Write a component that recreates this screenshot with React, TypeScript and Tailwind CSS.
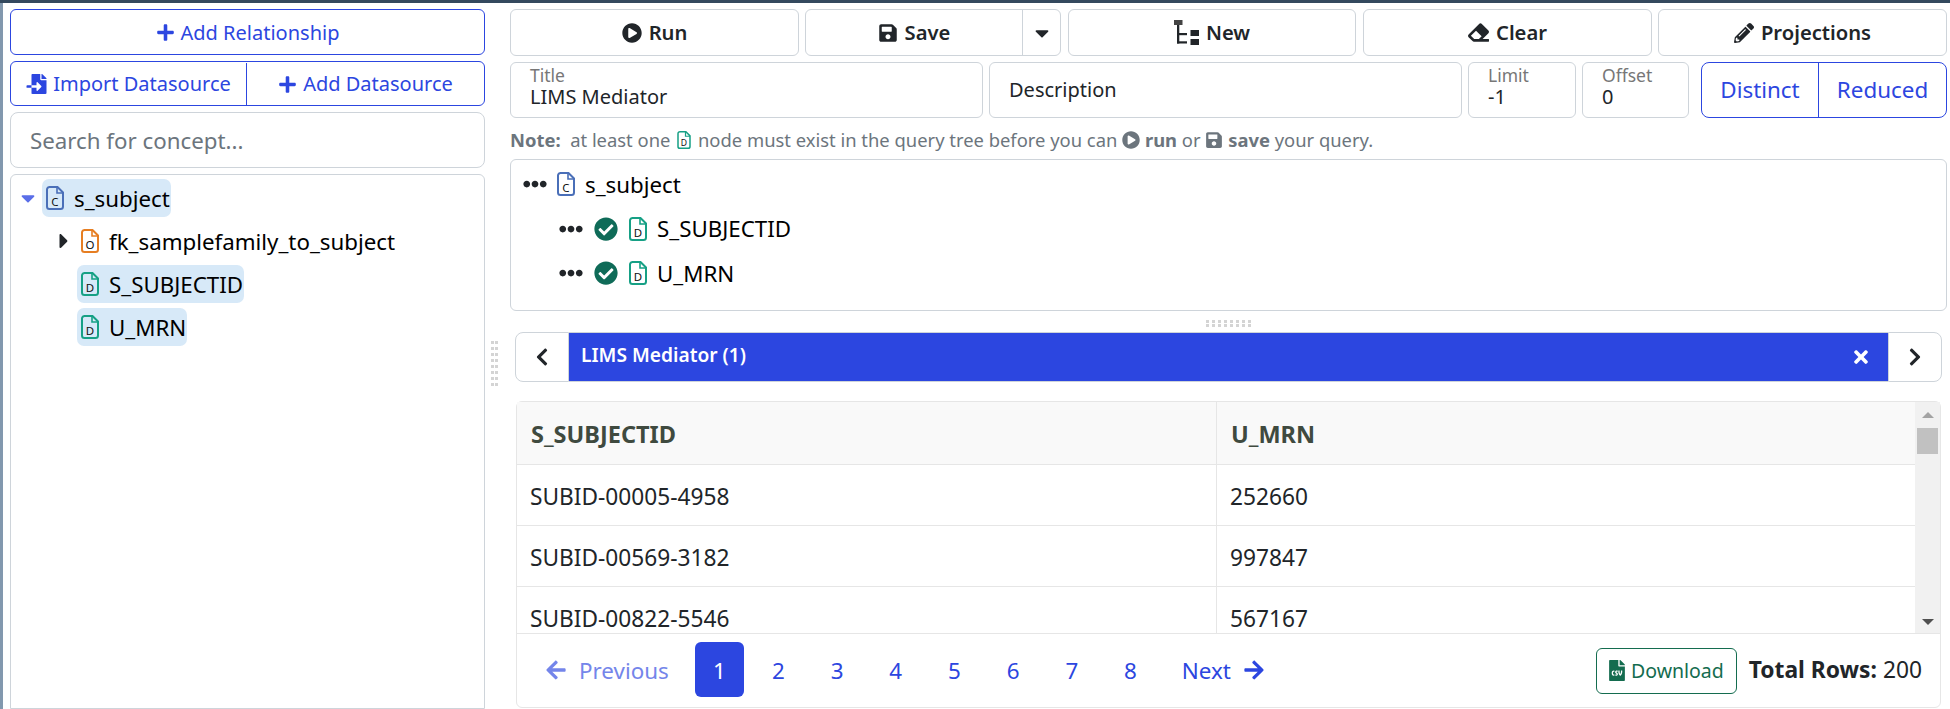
import React from "react";
import { FaPlus, FaFileImport, FaPlayCircle, FaSave, FaCaretDown, FaCaretRight, FaEraser, FaPencilAlt, FaEllipsisH, FaCheckCircle, FaChevronLeft, FaChevronRight, FaTimes, FaArrowLeft, FaArrowRight, FaFileCsv } from "react-icons/fa";

function FileIcon({ letter, className }: { letter: string; className: string }) {
  return (
    <svg viewBox="0 0 18 24" className={className} fill="none">
      <path d="M3 1h8.5L17 6.500V20.500a2.500 2.500 0 0 1-2.500 2.500h-11A2.500 2.500 0 0 1 1 20.500v-17A2.500 2.500 0 0 1 3.500 1z" stroke="currentColor" strokeWidth="2" />
      <path d="M11 1v6h6" stroke="currentColor" strokeWidth="1.600" />
      <text x="9" y="19.500" textAnchor="middle" fontSize="11.500" fill="#111" fontFamily="Noto Sans, sans-serif">{letter}</text>
    </svg>
  );
}

function NewIcon() {
  return (
    <svg viewBox="0 0 25 25" className="h-[25px] w-[25px]" fill="currentColor">
      <rect x="0" y="0" width="8.500" height="5" fill="#444" />
      <rect x="3" y="5" width="2.300" height="18.500" />
      <rect x="3" y="13" width="10" height="2.200" />
      <rect x="3" y="21.300" width="10" height="2.200" />
      <rect x="16.500" y="10" width="8.500" height="6" />
      <rect x="16.500" y="19" width="8.500" height="6" />
    </svg>
  );
}

function ActionButton({ children, className }: { children: React.ReactNode; className: string }) {
  return (
    <div className={"flex h-[47px] items-center justify-center gap-[7px] rounded-[6px] border border-[#ced4da] text-[20.200px] font-semibold text-[#212529] " + className}>
      {children}
    </div>
  );
}

function FloatField({ label, value, className }: { label: string; value: string; className: string }) {
  return (
    <div className={"flex h-[56px] flex-col justify-center rounded-[6px] border border-[#ced4da] px-[19px] pb-[6px] " + className}>
      <span className="text-[17.500px] leading-[20px] text-[#777]">{label}</span>
      <span className="text-[20px] leading-[24px] text-[#212529]">{value}</span>
    </div>
  );
}

function TreeRow({ letter, color, label, selected, className }: { letter: string; color: string; label: string; selected?: boolean; className: string }) {
  return (
    <div className={"flex h-[38px] items-center gap-[10px] rounded-[7px] pl-[4px] pr-[1px] " + (selected ? "bg-[#d7e9f8] " : "") + className}>
      <FileIcon letter={letter} className={"h-[24px] w-[18px] " + color} />
      <span className="pt-[2px] text-[22.300px] text-black">{label}</span>
    </div>
  );
}

function QueryRow({ letter, color, label, checked, className }: { letter: string; color: string; label: string; checked?: boolean; className: string }) {
  return (
    <div className={"flex h-[44.500px] items-center " + className}>
      <FaEllipsisH className="mr-[10px] h-[24px] w-[24px] text-[#212529]" />
      {checked && <FaCheckCircle className="mr-[11px] ml-[1px] h-[24px] w-[24px] text-[#0f6b58]" />}
      <FileIcon letter={letter} className={"mr-[10px] h-[24px] w-[18px] " + color} />
      <span className="text-[22.300px] text-black">{label}</span>
    </div>
  );
}

function Grip({ cols, rows, className }: { cols: number; rows: number; className: string }) {
  const dots = Array.from({ length: cols * rows });
  return (
    <div className={"grid " + className}>
      {dots.map((_, i) => (
        <span key={i} className="h-[3px] w-[3px] bg-[#d4d4d4]" />
      ))}
    </div>
  );
}

const rows = [
  ["SUBID-00005-4958", "252660"],
  ["SUBID-00569-3182", "997847"],
  ["SUBID-00822-5546", "567167"],
];

export default function App() {
  return (
    <div className="flex h-[709px] w-[1950px] flex-col overflow-hidden bg-white font-['Noto_Sans',sans-serif]">
      <div className="h-[3px] w-full shrink-0 bg-[#34495e]" />
      <div className="flex min-h-0 flex-1">
        <div className="w-[3px] shrink-0 bg-[#8298ae]" />
        {/* left panel */}
        <div className="flex w-[482px] shrink-0 flex-col pl-[7px] pt-[6px]">
          <div className="flex h-[46px] items-center justify-center gap-[6px] rounded-[6px] border border-[#2c46e0] pt-[1px] text-[20px] text-[#2c46e0]">
            <FaPlus className="h-[19px] w-[19px]" />
            Add Relationship
          </div>
          <div className="mt-[6px] flex h-[45px] rounded-[6px] border border-[#2c46e0] pt-[1px] text-[20px] text-[#2c46e0]">
            <div className="flex w-[236px] items-center justify-center gap-[6px] border-r border-[#2c46e0]">
              <FaFileImport className="h-[20px] w-[21px]" />
              Import Datasource
            </div>
            <div className="flex flex-1 items-center justify-center gap-[6px]">
              <FaPlus className="h-[19px] w-[19px]" />
              Add Datasource
            </div>
          </div>
          <div className="mt-[6px] flex h-[56px] items-center rounded-[8px] border border-[#ced4da] pl-[19px] pt-[2px] text-[22.300px] text-[#6c757d]">
            Search for concept...
          </div>
          <div className="mt-[6px] flex-1 rounded-t-[6px] border border-[#ced4da] pl-[10px] pt-[4px]">
            <div className="flex items-center">
              <FaCaretDown className="mr-[7px] h-[22px] w-[14px] text-[#5a6ee8]" />
              <TreeRow letter="C" color="text-[#4a6fb8]" label="s_subject" selected className="w-fit" />
            </div>
            <div className="ml-[36px] mt-[5px] flex items-center">
              <FaCaretRight className="mr-[6px] h-[24px] w-[14px] text-[#212529]" />
              <TreeRow letter="O" color="text-[#e67e22]" label="fk_samplefamily_to_subject" className="w-fit" />
            </div>
            <TreeRow letter="D" color="text-[#16a085]" label="S_SUBJECTID" selected className="ml-[56px] mt-[5px] w-fit" />
            <TreeRow letter="D" color="text-[#16a085]" label="U_MRN" selected className="ml-[56px] mt-[5px] w-fit" />
          </div>
        </div>
        {/* vertical splitter */}
        <div className="flex w-[25px] shrink-0 pl-[6px] pt-[338px]">
          <Grip cols={2} rows={8} className="h-fit grid-cols-[3px_3px] gap-x-[1px] gap-y-[3px]" />
        </div>
        {/* right panel */}
        <div className="flex min-w-0 flex-1 flex-col pt-[6px] pr-[3px]">
          <div className="flex gap-[6px]">
            <ActionButton className="w-[289px] border-[#2c46e0]">
              <FaPlayCircle className="h-[20px] w-[20px]" /> Run
            </ActionButton>
            <div className="flex h-[47px] w-[256px] rounded-[6px] border border-[#ced4da] text-[20.200px] font-semibold text-[#212529]">
              <div className="flex w-[217px] items-center justify-center gap-[7px] border-r border-[#ced4da]">
                <FaSave className="h-[20px] w-[20px]" /> Save
              </div>
              <div className="flex flex-1 items-center justify-center">
                <FaCaretDown className="h-[22px] w-[14px]" />
              </div>
            </div>
            <ActionButton className="ml-[1px] w-[288px]"><NewIcon /> New</ActionButton>
            <ActionButton className="ml-[1px] w-[289px]"><FaEraser className="h-[21px] w-[21px]" /> Clear</ActionButton>
            <ActionButton className="w-[289px]"><FaPencilAlt className="h-[20px] w-[20px]" /> Projections</ActionButton>
          </div>
          <div className="mt-[6px] flex">
            <FloatField label="Title" value="LIMS Mediator" className="w-[473px]" />
            <div className="ml-[6px] flex h-[56px] w-[473px] items-center rounded-[6px] border border-[#ced4da] pl-[19px] text-[20px] text-[#212529]">Description</div>
            <FloatField label="Limit" value="-1" className="ml-[6px] w-[108px]" />
            <FloatField label="Offset" value="0" className="ml-[6px] w-[107px]" />
            <div className="ml-[12px] flex h-[56px] w-[246px] rounded-[8px] border border-[#2c46e0] text-[22.400px] text-[#2c46e0]">
              <div className="flex w-[117px] items-center justify-center border-r border-[#2c46e0]">Distinct</div>
              <div className="flex flex-1 items-center justify-center">Reduced</div>
            </div>
          </div>
          <div className="mt-[10px] flex h-[24px] items-center whitespace-pre text-[18.400px] text-[#6c757d]">
            <b className="font-bold">Note:</b>
            <span>{"  at least one "}</span>
            <FileIcon letter="D" className="mx-[2px] h-[18px] w-[14px] text-[#16a085]" />
            <span>{" node must exist in the query tree before you can "}</span>
            <FaPlayCircle className="h-[18px] w-[18px]" />
            <b className="font-bold">{" run"}</b>
            <span>{" or "}</span>
            <FaSave className="h-[18px] w-[18px]" />
            <b className="font-bold">{" save"}</b>
            <span>{" your query."}</span>
          </div>
          <div className="mt-[7px] h-[152px] rounded-[6px] border border-[#ced4da] pt-[2px]">
            <QueryRow letter="C" color="text-[#4a6fb8]" label="s_subject" className="ml-[12px]" />
            <QueryRow letter="D" color="text-[#16a085]" label="S_SUBJECTID" checked className="ml-[48px]" />
            <QueryRow letter="D" color="text-[#16a085]" label="U_MRN" checked className="ml-[48px]" />
          </div>
          <div className="flex h-[21px] items-start justify-center pt-[9px]">
            <Grip cols={8} rows={2} className="grid-cols-[repeat(8,3px)] gap-x-[3px] gap-y-[1px]" />
          </div>
          {/* tabs */}
          <div className="ml-[5px] mr-[5px] flex h-[50px]">
            <div className="flex w-[54px] items-center justify-center rounded-l-[8px] border border-[#ced4da] text-[#212529]">
              <FaChevronLeft className="h-[20px] w-[16px]" />
            </div>
            <div className="flex flex-1 items-center justify-between border-y border-[#ced4da] bg-[#2c46e0] pl-[12px] pr-[18px] text-white">
              <span className="pb-[5px] text-[19.200px] font-semibold leading-none">LIMS Mediator (1)</span>
              <FaTimes className="h-[20px] w-[18px]" />
            </div>
            <div className="flex w-[54px] items-center justify-center rounded-r-[8px] border border-[#ced4da] text-[#212529]">
              <FaChevronRight className="h-[20px] w-[16px]" />
            </div>
          </div>
          {/* table card */}
          <div className="ml-[6px] mr-[6px] mt-[19px] flex h-[307px] flex-col rounded-[6px] border border-[#e6e6e6]">
            <div className="relative h-[231px] overflow-hidden">
              <div className="mr-[25px]">
                <div className="flex h-[63px] border-b border-[#e6e6e6] bg-[#f9f9f9] text-[23.500px] font-bold text-[#3f4a3f]">
                  <div className="flex w-[700px] items-center border-r border-[#e6e6e6] pl-[14px] pt-[4px]">S_SUBJECTID</div>
                  <div className="flex flex-1 items-center pl-[14px] pt-[4px]">U_MRN</div>
                </div>
                {rows.map((r) => (
                  <div key={r[0]} className="flex h-[61px] border-b border-[#e6e6e6] text-[22.700px] text-[#212529]">
                    <div className="flex w-[700px] items-center border-r border-[#e6e6e6] pl-[13px] pt-[4px]">{r[0]}</div>
                    <div className="flex flex-1 items-center pl-[13px] pt-[4px]">{r[1]}</div>
                  </div>
                ))}
              </div>
              <div className="absolute inset-y-0 right-0 w-[25px] bg-[#f1f1f1]">
                <div className="absolute left-1/2 top-[10px] h-0 w-0 -translate-x-1/2 border-x-[6px] border-b-[6px] border-x-transparent border-b-[#a3a3a3]" />
                <div className="absolute left-[2px] top-[26px] h-[26px] w-[21px] bg-[#c1c1c1]" />
                <div className="absolute bottom-[8px] left-1/2 h-0 w-0 -translate-x-1/2 border-x-[6px] border-t-[6px] border-x-transparent border-t-[#505050]" />
              </div>
            </div>
            <div className="flex flex-1 items-center border-t border-[#e6e6e6] pl-[27px] pr-[18px] text-[22.400px]">
              <div className="flex w-[151px] items-center gap-[11px] text-[#7485ea]">
                <FaArrowLeft className="h-[22px] w-[24px]" /> Previous
              </div>
              <div className="mb-[2px] flex h-[55px] w-[49px] items-center justify-center rounded-[6px] bg-[#2c46e0] pt-[2px] text-white">1</div>
              <div className="ml-[5px] flex text-[#2c46e0]">
                {["2", "3", "4", "5", "6", "7", "8"].map((n) => (
                  <div key={n} className="flex w-[58.700px] justify-center">{n}</div>
                ))}
              </div>
              <div className="ml-[22px] flex items-center gap-[11px] text-[#2c46e0]">
                Next <FaArrowRight className="h-[22px] w-[24px]" />
              </div>
              <div className="ml-auto flex h-[46px] items-center gap-[6px] rounded-[6px] border border-[#146c4f] px-[12px] text-[19.500px] text-[#146c4f]">
                <FaFileCsv className="h-[21px] w-[16px]" /> Download
              </div>
              <div className="ml-[12px] whitespace-pre text-[22.800px] text-[#212529]"><b className="font-bold">Total Rows:</b> 200</div>
            </div>
          </div>
        </div>
      </div>
    </div>
  );
}
